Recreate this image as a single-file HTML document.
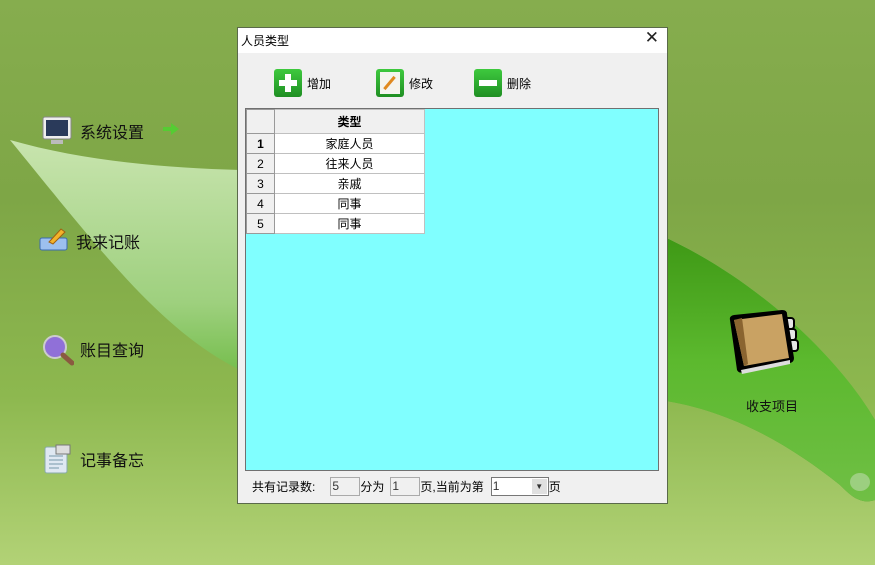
<!DOCTYPE html>
<html><head><meta charset="utf-8"><style>
*{margin:0;padding:0;box-sizing:border-box}
body{width:875px;height:565px;overflow:hidden;position:relative;font-family:"Liberation Sans","Noto Sans CJK SC",sans-serif;background:linear-gradient(180deg,#86ad4e 0%,#7ea646 35%,#8db84f 70%,#b2d276 100%)}
.bg{position:absolute;left:0;top:0}
.m{position:absolute;font-size:16px;color:#111}
.win{position:absolute;left:237px;top:27px;width:431px;height:477px;background:#f0f0f0;border:1px solid #5a6a4a}
.title{height:25px;background:#fff;font-size:12px;padding:4px 0 0 3px;position:relative}
.x{position:absolute;right:8px;top:0px;font-size:17px;font-weight:300;color:#222}
.tb{position:absolute;top:41px;font-size:12px;display:flex;align-items:center;gap:5px}
.ic{width:28px;height:28px;border-radius:3px;background:linear-gradient(#3ec93e,#1f8f23);position:relative}
.grid{position:absolute;left:7px;top:80px;width:414px;height:363px;background:#80ffff;border:1px solid #707070}
table{border-collapse:collapse;font-size:12px;position:absolute;left:0;top:0}
td{height:20px;border:1px solid #c0c0c0;text-align:center;background:#fff}
td.h{width:28px;background:#f0f0f0;border-color:#999}
.foot{position:absolute;top:449px;left:14px;font-size:12px;display:flex;align-items:center}
.inp{display:inline-block;height:19px;border:1px solid #aaa;background:#f0f0f0;padding:1px 1px;font-size:12px;color:#333}
</style></head><body>
<svg class="bg" width="875" height="565">
<defs>
<linearGradient id="lf" x1="0" y1="0" x2="0" y2="1"><stop offset="0" stop-color="#c8e4ae"/><stop offset="0.45" stop-color="#9ed07e"/><stop offset="0.75" stop-color="#5fb432"/><stop offset="1" stop-color="#3f9a1c"/></linearGradient>
<linearGradient id="lf2" x1="0" y1="0" x2="0" y2="1"><stop offset="0" stop-color="#3a9412"/><stop offset="0.5" stop-color="#5cb92e"/><stop offset="1" stop-color="#70bf45"/></linearGradient>
</defs>
<path d="M10 140 C80 160 160 168 240 170 L660 235 C760 280 840 360 875 420 L875 500 C860 505 850 495 840 485 C790 445 730 410 660 400 L240 370 C160 330 100 250 10 140Z" fill="url(#lf)"/>
<path d="M560 220 L660 235 C760 280 840 360 875 420 L875 500 C860 505 850 495 840 485 C790 445 730 410 660 400 L560 392Z" fill="url(#lf2)"/>
<ellipse cx="860" cy="482" rx="10" ry="9" fill="#9ccf80"/>
</svg>
<svg style="position:absolute;left:42px;top:116px" width="32" height="30"><rect x="1" y="1" width="28" height="22" rx="2" fill="#eee" stroke="#888"/><rect x="4" y="4" width="22" height="16" fill="#2a3a5a"/><rect x="9" y="24" width="12" height="4" fill="#bbb"/></svg>
<div class="m" style="left:80px;top:119px">系统设置</div>
<svg style="position:absolute;left:163px;top:123px" width="16" height="12"><path d="M0 4h8V0l8 6-8 6V8H0z" fill="#55cc33"/></svg>
<svg style="position:absolute;left:39px;top:226px" width="30" height="26"><rect x="1" y="12" width="27" height="12" rx="2" fill="#9cc0ee" stroke="#3a6ab0"/><path d="M10 16 L22 3 L26 6 L14 18Z" fill="#f3b32a" stroke="#a06010"/></svg>
<div class="m" style="left:76px;top:229px">我来记账</div>
<svg style="position:absolute;left:42px;top:334px" width="32" height="32"><circle cx="13" cy="13" r="11" fill="#9070d8" stroke="#ccc" stroke-width="2"/><path d="M21 21 L30 29" stroke="#8a5a40" stroke-width="5" stroke-linecap="round"/></svg>
<div class="m" style="left:80px;top:337px">账目查询</div>
<svg style="position:absolute;left:44px;top:444px" width="28" height="30"><rect x="1" y="3" width="22" height="26" rx="2" fill="#dfe8f2" stroke="#8aa"/><rect x="12" y="1" width="14" height="9" fill="#ddd" stroke="#777"/><path d="M5 12h14M5 16h14M5 20h14M5 24h10" stroke="#79a"/></svg>
<div class="m" style="left:80px;top:447px">记事备忘</div>
<svg style="position:absolute;left:726px;top:308px" width="78" height="82">
<rect x="54" y="10" width="14" height="11" rx="3" fill="#e6e6e6" stroke="#000" stroke-width="2"/>
<rect x="56" y="21" width="14" height="11" rx="3" fill="#e6e6e6" stroke="#000" stroke-width="2"/>
<rect x="58" y="32" width="14" height="11" rx="3" fill="#e6e6e6" stroke="#000" stroke-width="2"/>
<path d="M4 12 Q3 8 8 7 L56 2 Q61 2 61 6 L68 50 Q68 54 64 55 L18 64 Q13 66 11 62Z" fill="#000"/>
<path d="M8 12 L56 6 L63 50 L18 58Z" fill="#c9a263"/>
<path d="M8 12 L16 10 L22 56 L18 58Z" fill="#8a6430"/>
<path d="M15 62 L64 52 L64 56 L16 66Z" fill="#ddd"/>
</svg>
<div class="m" style="left:746px;top:396px;font-size:13px">收支项目</div>
<div class="win">
<div class="title">人员类型<span class="x">✕</span></div>
<div class="tb" style="left:36px"><div class="ic"><div style="position:absolute;left:11px;top:5px;width:6px;height:18px;background:#fff"></div><div style="position:absolute;left:5px;top:11px;width:18px;height:6px;background:#fff"></div></div>增加</div>
<div class="tb" style="left:138px"><div class="ic"><div style="position:absolute;left:4px;top:3px;width:20px;height:22px;background:#f4f4ee"></div><div style="position:absolute;left:12px;top:6px;width:3px;height:16px;background:#e08a20;transform:rotate(40deg)"></div></div>修改</div>
<div class="tb" style="left:236px"><div class="ic"><div style="position:absolute;left:5px;top:11px;width:18px;height:6px;background:#fff"></div></div>删除</div>
<div class="grid"><table>
<tr><td class="h" style="height:24px"></td><td style="width:150px;background:#f0f0f0;font-weight:bold">类型</td></tr>
<tr><td class="h"><b>1</b></td><td>家庭人员</td></tr>
<tr><td class="h">2</td><td>往来人员</td></tr>
<tr><td class="h">3</td><td>亲戚</td></tr>
<tr><td class="h">4</td><td>同事</td></tr>
<tr><td class="h">5</td><td>同事</td></tr>
</table></div>
<div class="foot">共有记录数:<span class="inp" style="width:30px;margin-left:15px">5</span>分为<span class="inp" style="width:30px;margin-left:6px">1</span>页,当前为第<span class="inp" style="width:58px;margin-left:7px;background:#fff;border-color:#777;position:relative">1<span style="position:absolute;right:1px;top:1px;width:15px;height:15px;background:#e0e0e0;font-size:8px;text-align:center;line-height:15px">▼</span></span>页</div>
</div>
</body></html>
